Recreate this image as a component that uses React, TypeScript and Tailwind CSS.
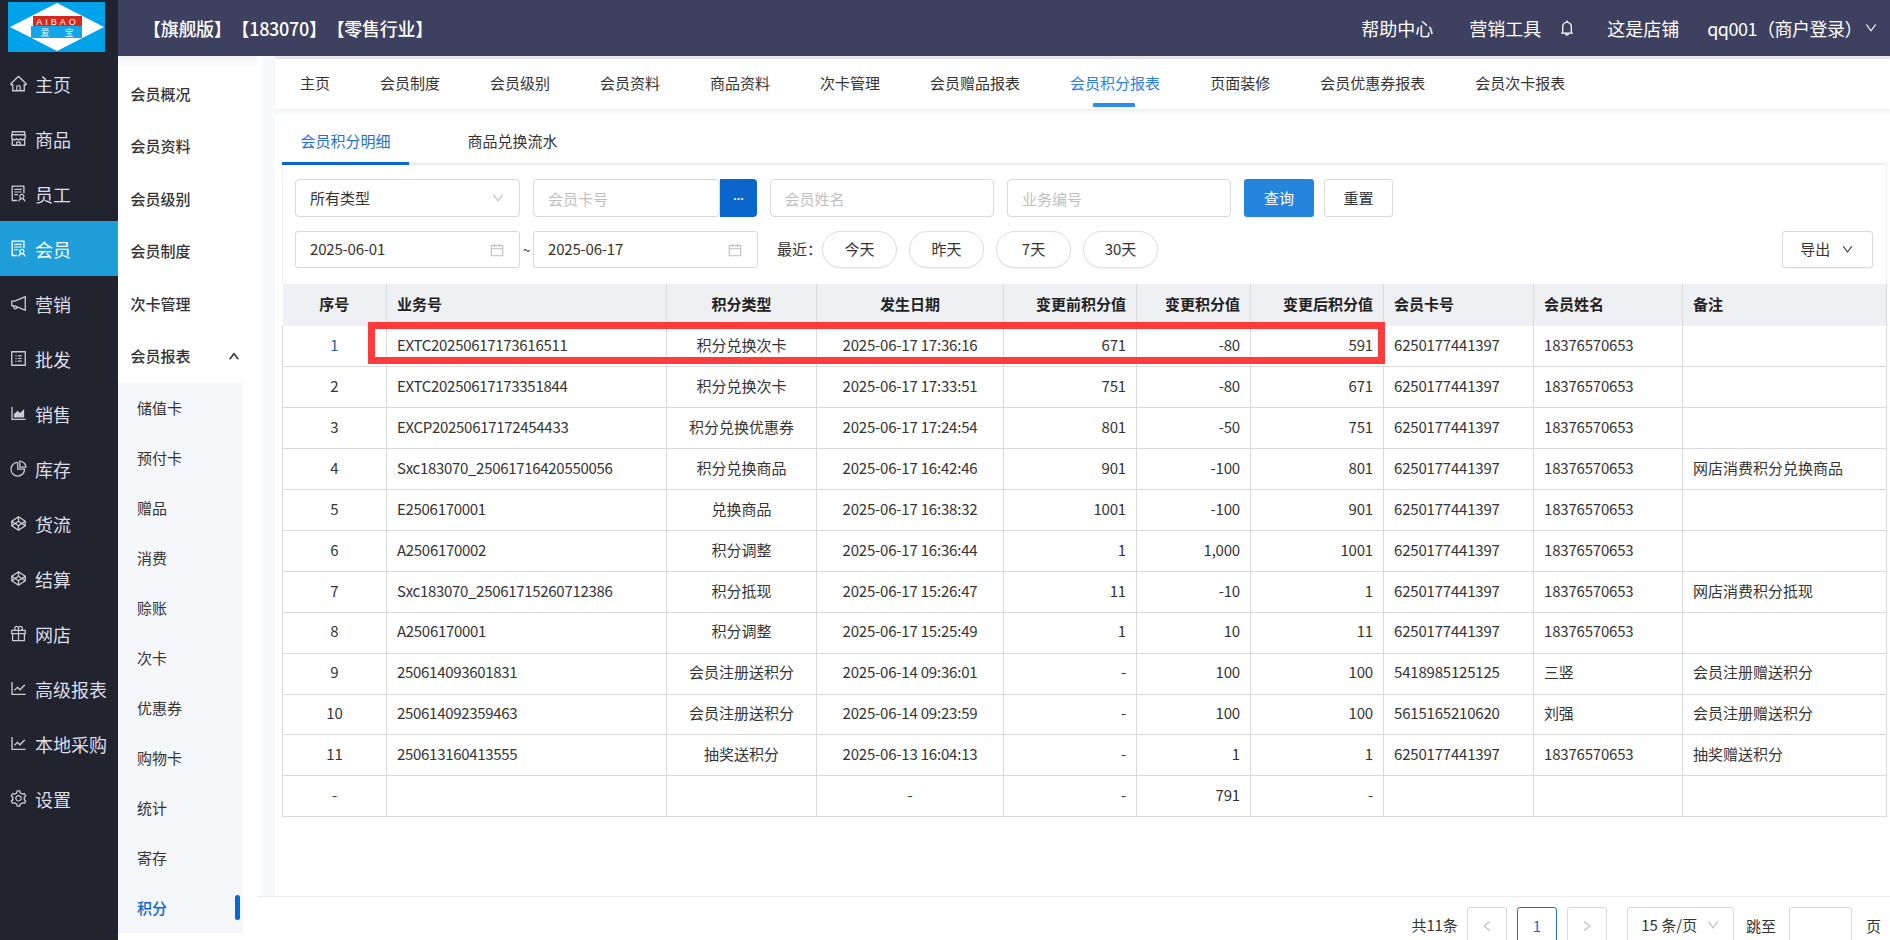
import type React from 'react';
import {
  AiOutlineAreaChart,
  AiOutlineBell,
  AiOutlineCalendar,
  AiOutlineCodepen,
  AiOutlineDown,
  AiOutlineGift,
  AiOutlineHome,
  AiOutlineLeft,
  AiOutlineLineChart,
  AiOutlineNotification,
  AiOutlinePieChart,
  AiOutlineProfile,
  AiOutlineRight,
  AiOutlineSetting,
  AiOutlineShop,
  AiOutlineSolution,
  AiOutlineUp,
} from 'react-icons/ai';

const navItems: { label: string; icon: React.ReactNode; active?: boolean }[] = [
  { label: '主页', icon: <AiOutlineHome /> },
  { label: '商品', icon: <AiOutlineShop /> },
  { label: '员工', icon: <AiOutlineSolution /> },
  { label: '会员', icon: <AiOutlineSolution />, active: true },
  { label: '营销', icon: <AiOutlineNotification /> },
  { label: '批发', icon: <AiOutlineProfile /> },
  { label: '销售', icon: <AiOutlineAreaChart /> },
  { label: '库存', icon: <AiOutlinePieChart /> },
  { label: '货流', icon: <AiOutlineCodepen /> },
  { label: '结算', icon: <AiOutlineCodepen /> },
  { label: '网店', icon: <AiOutlineGift /> },
  { label: '高级报表', icon: <AiOutlineLineChart /> },
  { label: '本地采购', icon: <AiOutlineLineChart /> },
  { label: '设置', icon: <AiOutlineSetting /> },
];

const menuItems = ['会员概况', '会员资料', '会员级别', '会员制度', '次卡管理'];
const subItems = ['储值卡', '预付卡', '赠品', '消费', '赊账', '次卡', '优惠券', '购物卡', '统计', '寄存'];
const topTabs = [
  '主页',
  '会员制度',
  '会员级别',
  '会员资料',
  '商品资料',
  '次卡管理',
  '会员赠品报表',
  '会员积分报表',
  '页面装修',
  '会员优惠券报表',
  '会员次卡报表',
];

const card = '6250177441397';
const phone = '18376570653';
const rows = [
  ['1', 'EXTC20250617173616511', '积分兑换次卡', '2025-06-17 17:36:16', '671', '-80', '591', card, phone, ''],
  ['2', 'EXTC20250617173351844', '积分兑换次卡', '2025-06-17 17:33:51', '751', '-80', '671', card, phone, ''],
  ['3', 'EXCP20250617172454433', '积分兑换优惠券', '2025-06-17 17:24:54', '801', '-50', '751', card, phone, ''],
  ['4', 'Sxc183070_25061716420550056', '积分兑换商品', '2025-06-17 16:42:46', '901', '-100', '801', card, phone, '网店消费积分兑换商品'],
  ['5', 'E2506170001', '兑换商品', '2025-06-17 16:38:32', '1001', '-100', '901', card, phone, ''],
  ['6', 'A2506170002', '积分调整', '2025-06-17 16:36:44', '1', '1,000', '1001', card, phone, ''],
  ['7', 'Sxc183070_25061715260712386', '积分抵现', '2025-06-17 15:26:47', '11', '-10', '1', card, phone, '网店消费积分抵现'],
  ['8', 'A2506170001', '积分调整', '2025-06-17 15:25:49', '1', '10', '11', card, phone, ''],
  ['9', '250614093601831', '会员注册送积分', '2025-06-14 09:36:01', '-', '100', '100', '5418985125125', '三竖', '会员注册赠送积分'],
  ['10', '250614092359463', '会员注册送积分', '2025-06-14 09:23:59', '-', '100', '100', '5615165210620', '刘强', '会员注册赠送积分'],
  ['11', '250613160413555', '抽奖送积分', '2025-06-13 16:04:13', '-', '1', '1', card, phone, '抽奖赠送积分'],
  ['-', '', '', '-', '-', '791', '-', '', '', ''],
];

const inputClass =
  'h-full w-[224px] rounded-[4px] border border-[#d9d9d9] bg-white px-[14px] text-[15px] text-[#333] outline-none placeholder:text-[#bfbfbf]';
const cellBase = 'border-r border-b border-[#dadada] px-[10px] pb-[2px] overflow-hidden whitespace-nowrap';

const Logo = () => (
  <svg viewBox="0 0 97 50" className="h-[50px] w-[97px]">
    <rect width="97" height="50" fill="#00a3ea" />
    <polygon points="2,25 49,1 96,25 49,49" fill="#fff" />
    <rect x="23" y="24" width="51" height="12" fill="#12a5e8" />
    <rect x="25" y="14" width="49" height="10" fill="#d5281f" />
    <text x="49.5" y="22.5" fill="#fff" fontSize="9" textAnchor="middle" letterSpacing="3" fontFamily="Liberation Sans">
      AIBAO
    </text>
    <text x="37" y="34" fill="#e6f6ff" fontSize="9" textAnchor="middle" fontFamily="Noto Sans CJK SC">
      爱
    </text>
    <text x="61" y="34" fill="#e6f6ff" fontSize="9" textAnchor="middle" fontFamily="Noto Sans CJK SC">
      宝
    </text>
  </svg>
);

const Pill = ({ label }: { label: string }) => (
  <button className="h-full w-[75px] rounded-full border border-[#dedede] bg-white text-[15px] text-[#333] shadow-[0_1px_2px_rgba(0,0,0,0.06)]">
    {label}
  </button>
);

const DateBox = ({ value }: { value: string }) => (
  <div className="flex h-full w-[225px] items-center justify-between rounded-[3px] border border-[#d9d9d9] bg-white pr-[14px] pl-[14px] text-[15px] tracking-[-0.2px] text-[#333]">
    <span>{value}</span>
    <AiOutlineCalendar className="text-[16px] text-[#bdbdbd]" />
  </div>
);

export default function App() {
  return (
    <div className="flex h-[940px] w-[1890px] overflow-hidden bg-white font-['Noto_Sans_CJK_SC',sans-serif] text-[#333]">
      {/* left nav */}
      <aside className="flex w-[118px] shrink-0 flex-col bg-[#21232f]">
        <div className="flex h-[56px] items-start pt-[2px] pl-[8px]">
          <Logo />
        </div>
        {navItems.map((item) => (
          <div
            key={item.label + (item.active ? '-active' : '')}
            className={`flex h-[55px] shrink-0 items-center gap-[7px] pl-[9px] text-[18px] ${
              item.active ? 'bg-[#1f9ed9] text-white' : 'text-[#dcdee8]'
            }`}
          >
            <span className={`text-[19px] ${item.active ? 'text-white' : 'text-[#c9cbd6]'}`}>{item.icon}</span>
            <span className="leading-none whitespace-nowrap">{item.label}</span>
          </div>
        ))}
      </aside>

      <div className="flex min-w-0 flex-1 flex-col">
        {/* top header */}
        <header className="flex h-[56px] shrink-0 items-center bg-[#3e405f] pl-[25px] text-[18px] text-white">
          <span className="font-medium [text-spacing-trim:space-all] tracking-[-0.3px]">【旗舰版】【183070】【零售行业】</span>
          <div className="ml-auto flex items-center pr-[12px]">
            <span>帮助中心</span>
            <span className="ml-[36px]">营销工具</span>
            <AiOutlineBell className="ml-[17px] text-[18px]" />
            <span className="ml-[31px]">这是店铺</span>
            <span className="ml-[28px] tracking-[-0.5px]">qq001（商户登录）</span>
            <AiOutlineDown className="ml-[2px] text-[14px]" />
          </div>
        </header>

        <div className="flex min-h-0 flex-1">
          {/* second menu */}
          <aside className="w-[139px] shrink-0 bg-[linear-gradient(#f2f2f4,#fff_12px)] pt-[12px]">
            {menuItems.map((m) => (
              <div key={m} className="flex h-[52.4px] items-center pl-[12.5px] text-[15px] font-medium text-[#333]">
                {m}
              </div>
            ))}
            <div className="mb-[1px] flex h-[52.4px] items-center justify-between pr-[17px] pl-[12.5px] text-[15px] font-medium text-[#333]">
              会员报表
              <AiOutlineUp className="text-[12px]" strokeWidth={70} />
            </div>
            <div className="w-[125px] bg-[#f5f6fa]">
              {subItems.map((s) => (
                <div key={s} className="flex h-[50px] items-center pl-[19px] text-[15px]">
                  {s}
                </div>
              ))}
              <div className="relative flex h-[50px] items-center pl-[19px] text-[15px] font-medium text-[#0a66d0]">
                积分
                <span className="absolute top-[12px] right-[3px] h-[25px] w-[5px] rounded-full bg-[#0a66d0]" />
              </div>
            </div>
          </aside>

          <main className="flex min-w-0 flex-1 flex-col bg-white">
            <div className="ml-[5px] flex min-h-0 flex-1 flex-col bg-[#f8f9fa] pl-[13px]">
              <div className="h-[3px] shrink-0 bg-[#e6e6e8]" />
              {/* page tabs */}
              <nav className="flex h-[50px] shrink-0 gap-[50px] bg-white pl-[25px] text-[15px] shadow-[0_1px_3px_rgba(0,0,0,0.06)]">
                {topTabs.map((t) => (
                  <div
                    key={t}
                    className={`relative flex items-center pb-[2px] whitespace-nowrap ${
                      t === '会员积分报表' ? 'text-[#2a7de1]' : 'text-[#333]'
                    }`}
                  >
                    {t}
                    {t === '会员积分报表' && (
                      <span className="absolute right-[25px] bottom-[2px] left-[23px] h-[4px] rounded-[1px] bg-[#2a8af6]" />
                    )}
                  </div>
                ))}
              </nav>
              <div className="h-[6px] shrink-0" />

              <section className="flex min-h-0 flex-1 flex-col bg-white pr-[3px] pl-[7px]">
                {/* sub tabs */}
                <div className="flex h-[50px] shrink-0 border-b-2 border-[#eeeeee] text-[15px]">
                  <div className="-mb-[2px] flex w-[127px] items-center justify-center border-b-[3px] border-[#0a66cf] pt-[5px] text-[#1f6fd0]">
                    会员积分明细
                  </div>
                  <div className="ml-[40px] flex w-[127px] items-center justify-center pt-[5px]">商品兑换流水</div>
                </div>

                {/* filters */}
                <div className="flex flex-col gap-[14px] border-x border-[#f0f0f0] pt-[14px] pr-[13px] pb-[16px] pl-[12px]">
                  <div className="flex h-[38px] items-stretch">
                    <div className="flex w-[225px] items-center justify-between rounded-[4px] border border-[#d9d9d9] px-[14px] text-[15px]">
                      所有类型
                      <AiOutlineDown className="text-[14px] text-[#bdbdbd]" />
                    </div>
                    <div className="ml-[13px] flex w-[224px]">
                      <input placeholder="会员卡号" className={`${inputClass} !w-[187px]`} />
                      <button className="flex w-[37px] items-center justify-center rounded-r-[4px] bg-[#0a66cc] pb-[6px] text-[11px] font-bold text-white">
                        ...
                      </button>
                    </div>
                    <input placeholder="会员姓名" className={`${inputClass} ml-[12.5px]`} />
                    <input placeholder="业务编号" className={`${inputClass} ml-[13.5px]`} />
                    <button className="ml-[13px] w-[70px] rounded-[3px] bg-[#2585dd] text-[15px] text-white">查询</button>
                    <button className="ml-[10px] w-[69px] rounded-[3px] border border-[#d9d9d9] bg-white text-[15px]">重置</button>
                  </div>
                  <div className="flex h-[37px] items-stretch">
                    <DateBox value="2025-06-01" />
                    <span className="flex w-[13px] items-center justify-center text-[13px]">~</span>
                    <DateBox value="2025-06-17" />
                    <span className="mr-[10px] ml-[19px] flex items-center text-[15px]">最近：</span>
                    <div className="-ml-[10px] flex gap-[12px]">
                      <Pill label="今天" />
                      <Pill label="昨天" />
                      <Pill label="7天" />
                      <Pill label="30天" />
                    </div>
                    <button className="ml-auto flex w-[91.5px] items-center justify-center gap-[11px] rounded-[3px] border border-[#d9d9d9] bg-white text-[15px] shadow-[0_1px_2px_rgba(0,0,0,0.05)]">
                      导出
                      <AiOutlineDown className="text-[13px]" />
                    </button>
                  </div>
                </div>

                {/* table */}
                <div className="relative">
                  <table className="w-[1604px] table-fixed border-collapse text-[15px]">
                    <colgroup>
                      <col className="w-[104px]" />
                      <col className="w-[280px]" />
                      <col className="w-[150px]" />
                      <col className="w-[187px]" />
                      <col className="w-[133px]" />
                      <col className="w-[114px]" />
                      <col className="w-[133px]" />
                      <col className="w-[150px]" />
                      <col className="w-[149px]" />
                      <col className="w-[204px]" />
                    </colgroup>
                    <thead>
                      <tr className="h-[42px] bg-[#eff0f4] font-semibold text-[#222]">
                        <th className="border-r border-[#dadada] pb-[2px] text-center font-semibold">序号</th>
                        <th className="border-r border-[#dadada] px-[10px] pb-[2px] text-left font-semibold">业务号</th>
                        <th className="border-r border-[#dadada] pb-[2px] text-center font-semibold">积分类型</th>
                        <th className="border-r border-[#dadada] pb-[2px] text-center font-semibold">发生日期</th>
                        <th className="border-r border-[#dadada] px-[10px] pb-[2px] text-right font-semibold">变更前积分值</th>
                        <th className="border-r border-[#dadada] px-[10px] pb-[2px] text-right font-semibold">变更积分值</th>
                        <th className="border-r border-[#dadada] px-[10px] pb-[2px] text-right font-semibold">变更后积分值</th>
                        <th className="border-r border-[#dadada] px-[10px] pb-[2px] text-left font-semibold">会员卡号</th>
                        <th className="border-r border-[#dadada] px-[10px] pb-[2px] text-left font-semibold">会员姓名</th>
                        <th className="border-r border-[#dadada] px-[10px] pb-[2px] text-left font-semibold">备注</th>
                      </tr>
                    </thead>
                    <tbody>
                      {rows.map((r, i) => (
                        <tr key={i} className="h-[40.9px]">
                          <td className={`${cellBase} border-l text-center ${i === 0 ? 'text-[#1f5f9e]' : ''}`}>{r[0]}</td>
                          <td className={`${cellBase} tracking-[-0.3px]`}>{r[1]}</td>
                          <td className={`${cellBase} text-center`}>{r[2]}</td>
                          <td className={`${cellBase} text-center tracking-[-0.2px]`}>{r[3]}</td>
                          <td className={`${cellBase} text-right tracking-[-0.2px]`}>{r[4]}</td>
                          <td className={`${cellBase} text-right tracking-[-0.2px]`}>{r[5]}</td>
                          <td className={`${cellBase} text-right tracking-[-0.2px]`}>{r[6]}</td>
                          <td className={`${cellBase} tracking-[-0.2px]`}>{r[7]}</td>
                          <td className={`${cellBase} tracking-[-0.2px]`}>{r[8]}</td>
                          <td className={cellBase}>{r[9]}</td>
                        </tr>
                      ))}
                    </tbody>
                  </table>
                  {/* annotation box drawn over row 1 */}
                  <div className="pointer-events-none absolute top-[38px] left-[86px] h-[42px] w-[1017px] border-[7px] border-[#ff3b3b]" />
                </div>
              </section>
            </div>

            {/* pagination */}
            <footer className="flex h-[44px] shrink-0 items-start justify-end border-t border-[#ececec] pt-[10px] pr-[9px] text-[15px]">
              <span className="mt-[7px] mr-[9.5px] tracking-[-0.2px]">共11条</span>
              <div className="flex h-[38px] w-[40px] items-center justify-center rounded-[3px] border border-[#d9d9d9] text-[#bdbdbd]">
                <AiOutlineLeft className="text-[14px]" />
              </div>
              <div className="ml-[10px] flex h-[38px] w-[40px] items-center justify-center rounded-[3px] border border-[#1f6fd0] text-[#1f6fd0]">
                1
              </div>
              <div className="ml-[10px] flex h-[38px] w-[40px] items-center justify-center rounded-[3px] border border-[#d9d9d9] text-[#bdbdbd]">
                <AiOutlineRight className="text-[14px]" />
              </div>
              <div className="ml-[20px] flex h-[38px] w-[107.5px] items-center justify-center gap-[9px] rounded-[3px] border border-[#d9d9d9] pb-[2px]">
                15 条/页
                <AiOutlineDown className="text-[14px] text-[#bdbdbd]" />
              </div>
              <span className="mt-[8px] ml-[11.5px]">跳至</span>
              <div className="ml-[13px] h-[38px] w-[63px] rounded-[3px] border border-[#d9d9d9]" />
              <span className="mt-[8px] ml-[14px]">页</span>
            </footer>
          </main>
        </div>
      </div>
    </div>
  );
}
